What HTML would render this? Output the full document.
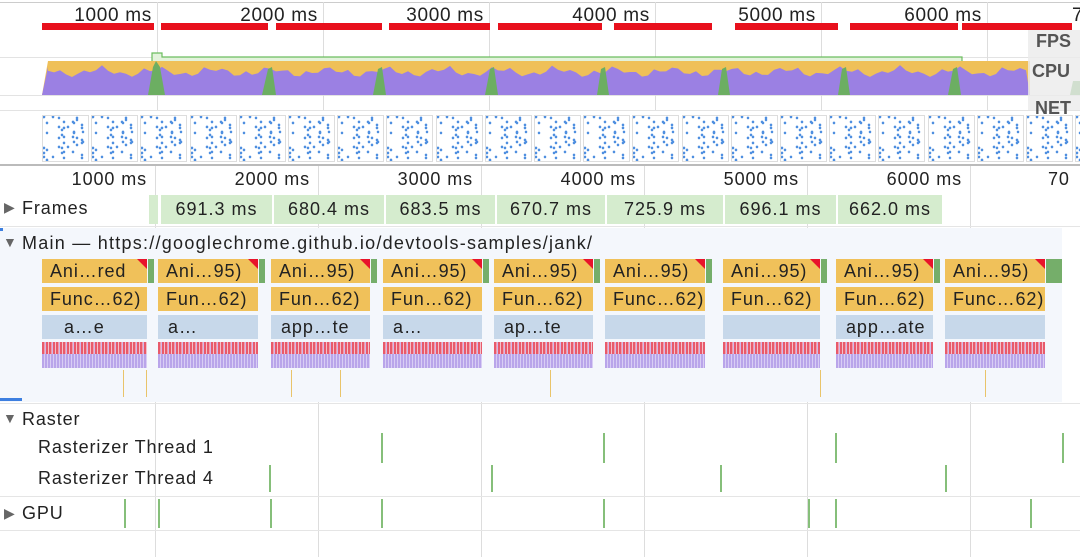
<!DOCTYPE html>
<html><head><meta charset="utf-8"><style>
*{margin:0;padding:0;box-sizing:border-box}
body{width:1080px;height:557px;overflow:hidden;background:#fff;font-family:"Liberation Sans",Helvetica,sans-serif;color:#222;position:relative}
.a{position:absolute}
.t{position:absolute;font-size:18px;letter-spacing:0.9px;white-space:nowrap}
.vl{position:absolute;width:1px;background:#ddd}
.blk{position:absolute;height:24px;background:#f0c15a;font-size:18px;letter-spacing:0.9px;line-height:24px;padding-left:8px;overflow:hidden;white-space:nowrap;color:#222}
.blu{background:#c7d8ea}
.fr{position:absolute;top:195px;height:29px;background:#d5ecce;font-size:18px;letter-spacing:1px;line-height:29px;text-align:center}
.tri{position:absolute;right:0;top:0;width:0;height:0;border-top:10px solid #e8132b;border-left:10px solid transparent}
.str{position:absolute;top:342px;height:26px;background:
 repeating-linear-gradient(90deg,#e85a6b 0 2px,#f1a0aa 2px 3px,#d2b7ea 3px 4px,#e85a6b 4px 6px,#f4c0c8 6px 7px);}
.str::after{content:"";position:absolute;left:0;right:0;top:12px;bottom:0;background:repeating-linear-gradient(90deg,#b9a5ea 0 2px,#d8cdf4 2px 3px)}
.thumb{position:absolute;top:115px;width:47px;height:47px;border:1px solid #ddd;background:#fff}
</style></head><body>
<div class="a" style="left:0;top:2px;width:1080px;height:1px;background:#ccc"></div>
<div class="a" style="left:0;top:57px;width:1080px;height:1px;background:#e3e3e3"></div>
<div class="a" style="left:0;top:95px;width:1080px;height:1px;background:#e3e3e3"></div>
<div class="a" style="left:0;top:110px;width:1080px;height:1px;background:#e3e3e3"></div>
<div id="ov"></div>
<svg class="a" style="left:0;top:45px" width="1080" height="52">
<path d="M152 16 V8 H162 V12 H962 V16" fill="#e3f3dc" stroke="#6cbd5f" stroke-width="1.2"/>
<path d="M42 50 L48 16 H1030 V50 Z" fill="#efc058"/>
<path id="pp" d="" fill="#9b80e3"/>
<g fill="#6cae62">
<path d="M148 50 L153 22 L156 16 L160 22 L165 50Z"/>
<path d="M262 50 L268 24 L272 22 L276 50Z"/>
<path d="M373 50 L378 24 L382 22 L386 50Z"/>
<path d="M485 50 L490 24 L494 22 L498 50Z"/>
<path d="M597 50 L601 24 L605 22 L609 50Z"/>
<path d="M718 50 L722 24 L726 22 L730 50Z"/>
<path d="M838 50 L842 24 L846 22 L850 50Z"/>
<path d="M948 50 L953 24 L957 22 L961 50Z"/>
<path d="M1070 50 L1073 36 L1080 36 V50Z"/>
</g>
</svg>
<div class="a" style="left:1028px;top:30px;width:52px;height:80px;background:rgba(235,235,235,.8)"></div>
<div class="t" style="left:1036px;top:31px;font-weight:bold;color:#555;letter-spacing:0">FPS</div>
<div class="t" style="left:1032px;top:61px;font-weight:bold;color:#555;letter-spacing:0">CPU</div>
<div class="t" style="left:1035px;top:98px;font-weight:bold;color:#555;letter-spacing:0">NET</div>
<div class="a" style="left:0;top:164px;width:1080px;height:2px;background:#bbb"></div>

<div id="lo"></div>
<div class="a" style="left:0;top:228px;width:1062px;height:174px;background:#f4f7fc"></div>
<div class="a" style="left:0;top:226px;width:1080px;height:1px;background:#e5e5e5"></div>
<div class="a" style="left:0;top:403px;width:1080px;height:1px;background:#e5e5e5"></div>
<div class="a" style="left:0;top:398px;width:22px;height:3px;background:#3d7fe0"></div>
<div class="a" style="left:0;top:228px;width:3px;height:3px;background:#3d7fe0"></div>
<div class="a" style="left:0;top:496px;width:1080px;height:1px;background:#e5e5e5"></div>
<div class="a" style="left:0;top:530px;width:1080px;height:1px;background:#e5e5e5"></div>

<div class="t" style="left:4px;top:199px;font-size:14px;color:#666">▶</div>
<div class="t" style="left:22px;top:198px">Frames</div>
<div class="t" style="left:3px;top:234px;font-size:14px;color:#666">▼</div>
<div class="t" style="left:22px;top:233px;letter-spacing:1.25px">Main — https://googlechrome.github.io/devtools-samples/jank/</div>
<div class="t" style="left:3px;top:410px;font-size:14px;color:#666">▼</div>
<div class="t" style="left:22px;top:409px">Raster</div>
<div class="t" style="left:38px;top:437px">Rasterizer Thread 1</div>
<div class="t" style="left:38px;top:468px">Rasterizer Thread 4</div>
<div class="t" style="left:4px;top:505px;font-size:14px;color:#666">▶</div>
<div class="t" style="left:22px;top:503px">GPU</div>
<div id="main"></div>
<script>
function h(p,s){document.getElementById(p).insertAdjacentHTML('beforeend',s)}
var og=[157,323,489,655,821,987];
og.forEach(function(x,i){h('ov','<div class="vl" style="left:'+x+'px;top:2px;height:108px"></div><div class="t" style="left:'+(x-95)+'px;top:5px;width:90px;text-align:right;font-size:19px;letter-spacing:0.7px">'+((i+1)*1000)+' ms</div>')});
h('ov','<div class="t" style="left:1072px;top:5px;font-size:19px">7</div>');
[[42,154],[161,268],[276,382],[389,490],[498,602],[614,712],[735,838],[850,958],[962,1072]].forEach(function(r){h('ov','<div class="a" style="left:'+r[0]+'px;top:23px;width:'+(r[1]-r[0])+'px;height:7px;background:#e8101c"></div>')});
var d='M42 50 L48 22';for(var x=48;x<=1030;x+=6){var y=23+6*Math.abs(Math.sin(x*0.37))+3*Math.sin(x*0.11);d+=' L'+x+' '+y.toFixed(1)}d+=' L1030 50Z';document.getElementById('pp').setAttribute('d',d);
var dots='';for(var i=0;i<170;i++){var a=(i*37+i*i)%45+1,b=(i*53+i*i*3)%45+1;dots+='<circle cx="'+a+'" cy="'+b+'" r="1.2" fill="#4f8fe0"/>'}
for(var x=42;x<1080;x+=49.2){h('ov','<div class="thumb" style="left:'+x.toFixed(0)+'px"><svg width="45" height="45">'+dots+'</svg></div>')}
var lg=[155,318,481,644,807,970];
lg.forEach(function(x,i){h('lo','<div class="vl" style="left:'+x+'px;top:166px;height:391px"></div><div class="t" style="left:'+(x-100)+'px;top:169px;width:92px;text-align:right">'+((i+1)*1000)+' ms</div>')});
h('lo','<div class="t" style="left:1048px;top:169px">70</div>');
h('main','<div class="fr" style="left:149px;width:9px"></div>');
var fr=[[160,273,'691.3 ms'],[273,385,'680.4 ms'],[385,496,'683.5 ms'],[496,606,'670.7 ms'],[606,724,'725.9 ms'],[724,837,'696.1 ms'],[837,943,'662.0 ms']];
fr.forEach(function(f){h('main','<div class="fr" style="left:'+(f[0]+1)+'px;width:'+(f[1]-f[0]-2)+'px">'+f[2]+'</div>')});
var bl=[[42,147,'Ani…red','Func…62)','a…e'],[158,258,'Ani…95)','Fun…62)','a…'],[271,370,'Ani…95)','Fun…62)','app…te'],[383,482,'Ani…95)','Fun…62)','a…'],[494,593,'Ani…95)','Fun…62)','ap…te'],[605,705,'Ani…95)','Func…62)',''],[723,820,'Ani…95)','Fun…62)',''],[836,933,'Ani…95)','Fun…62)','app…ate'],[945,1045,'Ani…95)','Func…62)','']];
bl.forEach(function(b){var w=b[1]-b[0];
h('main','<div class="blk" style="left:'+b[0]+'px;top:259px;width:'+w+'px">'+b[2]+'<div class="tri"></div></div>');
h('main','<div class="a" style="left:'+(b[1]+1)+'px;top:259px;width:6px;height:24px;background:#75ae6a"></div>');
h('main','<div class="blk" style="left:'+b[0]+'px;top:287px;width:'+w+'px">'+b[3]+'</div>');
h('main','<div class="blk blu" style="left:'+b[0]+'px;top:315px;width:'+w+'px;padding-left:'+(b[4]=='a…e'?22:10)+'px">'+b[4]+'</div>');
h('main','<div class="str" style="left:'+b[0]+'px;width:'+w+'px"></div>');
});
h('main','<div class="a" style="left:1052px;top:259px;width:10px;height:24px;background:#75ae6a"></div>');
[123,146,291,340,550,820,985].forEach(function(x){h('main','<div class="a" style="left:'+x+'px;top:370px;width:1px;height:27px;background:#e9c46a"></div>')});
[[381,433,30],[603,433,30],[835,433,30],[1062,433,30],[269,465,27],[491,465,27],[720,465,27],[945,465,27],[124,499,29],[158,499,29],[270,499,29],[381,499,29],[603,499,29],[808,499,29],[835,499,29],[1030,499,29]].forEach(function(t){h('main','<div class="a" style="left:'+t[0]+'px;top:'+t[1]+'px;width:1.5px;height:'+t[2]+'px;background:#86bf7a"></div>')});
</script>
</body></html>
